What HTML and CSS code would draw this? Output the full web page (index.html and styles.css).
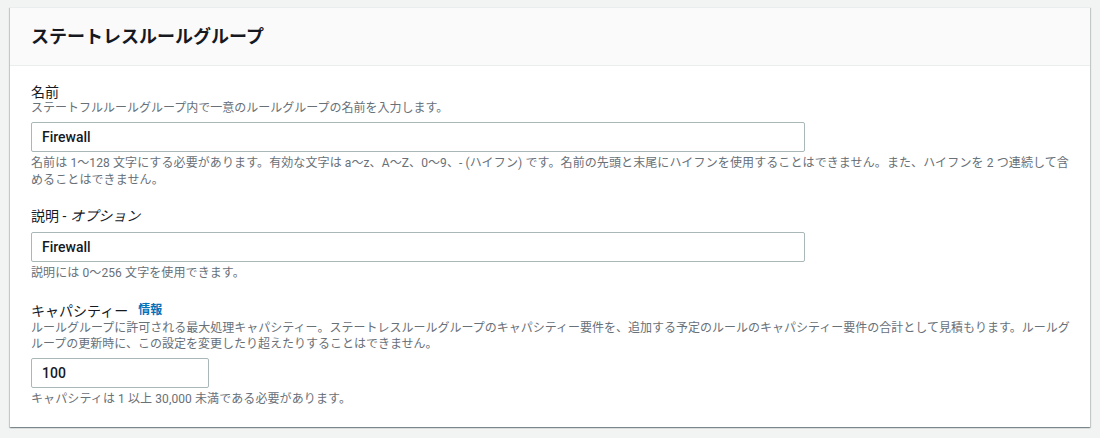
FILE: index.html
```html
<!DOCTYPE html>
<html lang="ja">
<head>
    <meta charset="UTF-8">
    <meta name="viewport" content="width=device-width, initial-scale=1.0">
    <title>ステートレスルールグループ</title>
    <link rel="stylesheet" href="styles.css">
</head>
<body>
    <div class="panel">
        <!-- Header -->
        <div class="panel-header">
            <h2>ステートレスルールグループ</h2>
        </div>

        <!-- Form fields -->
        <div class="panel-body">
            <div class="field">
                <label class="field-label" for="ruleName">名前</label>
                <p class="field-desc">ステートフルルールグループ内で一意のルールグループの名前を入力します。</p>
                <input id="ruleName" class="text-input" type="text" value="Firewall">
                <p class="field-hint">名前は 1〜128 文字にする必要があります。有効な文字は a〜z、A〜Z、0〜9、- (ハイフン) です。名前の先頭と末尾にハイフンを使用することはできません。また、ハイフンを 2 つ連続して含めることはできません。</p>
            </div>

            <div class="field">
                <label class="field-label" for="ruleDesc">説明 - <i>オプション</i></label>
                <input id="ruleDesc" class="text-input" type="text" value="Firewall">
                <p class="field-hint">説明には 0〜256 文字を使用できます。</p>
            </div>

            <div class="field">
                <label class="field-label" for="capacity">キャパシティー <a class="info-link" href="#">情報</a></label>
                <p class="field-desc">ルールグループに許可される最大処理キャパシティー。ステートレスルールグループのキャパシティー要件を、追加する予定のルールのキャパシティー要件の合計として見積もります。ルールグループの更新時に、この設定を変更したり超えたりすることはできません。</p>
                <input id="capacity" class="text-input small" type="text" value="100">
                <p class="field-hint">キャパシティは 1 以上 30,000 未満である必要があります。</p>
            </div>
        </div>
    </div>
</body>
</html>
```

FILE: styles.css
```css
body {
    margin: 0;
    padding: 7px 10px 10px;
    font-family: 'Roboto', 'Noto Sans CJK JP', sans-serif;
    background-color: #f2f3f3;
    color: #16191f;
}

.panel {
    background-color: #fff;
    border-top: 1px solid #eaeded;
    box-shadow: 0 1px 1px 0 rgba(0, 28, 36, 0.3),
                1px 1px 1px 0 rgba(0, 28, 36, 0.15),
                -1px 1px 1px 0 rgba(0, 28, 36, 0.15);
}

.panel-header {
    background-color: #fafafa;
    border-bottom: 1px solid #eaeded;
    padding: 18px 21px 17px;
}

.panel-header h2 {
    margin: 0;
    font-size: 18px;
    line-height: 22px;
    font-weight: 700;
}

.panel-body {
    padding: 18px 17px 19px 21px;
    display: flex;
    flex-direction: column;
    gap: 19px;
}

.field {
    display: flex;
    flex-direction: column;
    align-items: flex-start;
}

.field-label {
    font-size: 14px;
    line-height: 16px;
    display: flex;
    align-items: center;
    gap: 10px;
}

.field-label i {
    margin-left: -6px;
}

.field-label + .text-input {
    margin-top: 8px;
}

.info-link {
    color: #0073bb;
    font-size: 12px;
    line-height: 19px;
    font-weight: 700;
    text-decoration: none;
}

.field-desc {
    margin: 0;
    font-size: 12px;
    line-height: 16px;
    color: #687078;
}

.field-hint {
    margin: 3px 0 0;
    font-size: 12px;
    line-height: 17px;
    letter-spacing: 0.1px;
    color: #687078;
}

.text-input {
    box-sizing: border-box;
    width: 774px;
    height: 30px;
    margin-top: 6px;
    padding: 0 10px;
    border: 1px solid #aab7b8;
    border-radius: 2px;
    font-family: inherit;
    font-size: 14px;
    font-weight: 500;
    color: #16191f;
    background-color: #fff;
}

.text-input.small {
    width: 178px;
}
```
